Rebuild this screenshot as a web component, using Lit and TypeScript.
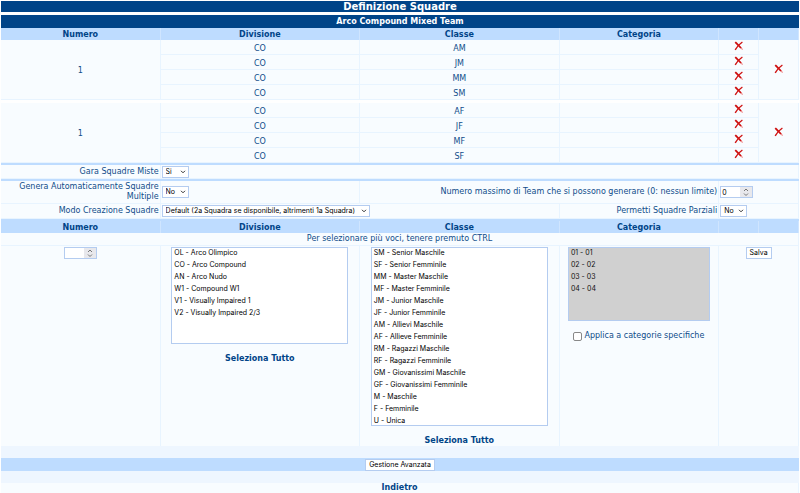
import { LitElement, html, css, nothing } from "lit";
import { customElement } from "lit/decorators.js";

interface Team {
  numero: number;
  divisione: string;
  classi: string[];
}

const TEAMS: Team[] = [
  { numero: 1, divisione: "CO", classi: ["AM", "JM", "MM", "SM"] },
  { numero: 1, divisione: "CO", classi: ["AF", "JF", "MF", "SF"] },
];

const DIVISIONI = [
  "OL - Arco Olimpico",
  "CO - Arco Compound",
  "AN - Arco Nudo",
  "W1 - Compound W1",
  "V1 - Visually Impaired 1",
  "V2 - Visually Impaired 2/3",
];

const CLASSI = [
  "SM - Senior Maschile",
  "SF - Senior Femminile",
  "MM - Master Maschile",
  "MF - Master Femminile",
  "JM - Junior Maschile",
  "JF - Junior Femminile",
  "AM - Allievi Maschile",
  "AF - Allieve Femminile",
  "RM - Ragazzi Maschile",
  "RF - Ragazzi Femminile",
  "GM - Giovanissimi Maschile",
  "GF - Giovanissimi Femminile",
  "M - Maschile",
  "F - Femminile",
  "U - Unica",
];

const CATEGORIE = ["01 - 01", "02 - 02", "03 - 03", "04 - 04"];

const cross = html`<svg class="cross" viewBox="0 0 10 10" aria-hidden="true">
  <path d="M2 1.2 L8.6 8.6" stroke="#f08c8c" stroke-width="1.2" />
  <path d="M1.2 1.2 L7 7" stroke="#cc1111" stroke-width="1.7" />
  <path d="M8.4 1 C6 2.6 3 5.6 1.2 8.8" stroke="#d01414" stroke-width="1.4" />
</svg>`;

const chevron = html`<svg class="chevron" viewBox="0 0 6 4" aria-hidden="true">
  <path d="M1 .8 L3 2.8 L5 .8" />
</svg>`;

const spinner = html`<svg class="spinner" viewBox="0 0 12 10" aria-hidden="true">
  <path d="M4 4 L6 2 L8 4 M4 6.5 L6 8.5 L8 6.5" />
</svg>`;

const headings = html`<tr class="heading">
  <th scope="col">Numero</th>
  <th scope="col">Divisione</th>
  <th scope="col">Classe</th>
  <th scope="col">Categoria</th>
  <th></th>
  <th></th>
</tr>`;

@customElement("app-root")
export class AppRoot extends LitElement {
  static styles = css`
    :host {
      display: block;
      padding: 1px 1px 0;
      background: #ffffff;
      color: #0f4c8a;
      font: 8px/10px "DejaVu Sans", sans-serif;
    }
    * {
      box-sizing: border-box;
    }
    table {
      width: 100%;
      table-layout: fixed;
      border-collapse: separate;
      border-spacing: 0;
      background: #f8fcff;
    }
    .wide {
      width: 25%;
    }
    .medium {
      width: 20%;
    }
    .narrow {
      width: 5%;
    }
    td,
    th {
      padding: 0;
      text-align: center;
    }
    td {
      border-right: 1px solid #e8f4ff;
      border-bottom: 1px solid #e8f4ff;
    }
    .title th {
      height: 11px;
      background: #004488;
      color: #ffffff;
      font-size: 10px;
    }
    .subtitle th {
      height: 13px;
      background: #004488;
      color: #ffffff;
      font-size: 8px;
    }
    .heading th {
      height: 12px;
      padding-top: 1px;
      background: #bedcff;
      color: #004488;
      border-right: 1px solid #cfe5ff;
    }
    .gap td {
      height: 3px;
      border: 0;
      background: #ffffff;
    }
    .rule td {
      height: 2px;
      border: 0;
      background: #bedcff;
    }
    .team td {
      height: 15px;
      padding-top: 3px;
    }
    .team .action {
      padding-top: 0;
    }
    .mixed td {
      height: 14px;
    }
    .auto td {
      height: 23px;
    }
    .mode td {
      height: 15px;
    }
    .hint td {
      height: 13px;
    }
    .label {
      text-align: right;
      padding-right: 1px;
    }
    .field {
      text-align: left;
      padding-left: 1px;
    }
    .picker {
      display: inline-flex;
      align-items: center;
      position: relative;
      vertical-align: middle;
    }
    select,
    input,
    button {
      margin: 0;
      border: 1px solid #b4ccf0;
      border-radius: 0;
      background: #ffffff;
      color: #000000;
      font: 7px/10px Inter, "Liberation Sans", sans-serif;
    }
    .picker select {
      appearance: none;
      height: 12px;
      padding: 0 10px 0 3px;
    }
    .short select {
      width: 27px;
    }
    .long select {
      width: 208px;
    }
    .chevron {
      position: absolute;
      right: 3px;
      width: 6px;
      height: 4px;
      pointer-events: none;
    }
    .chevron path,
    .spinner path {
      fill: none;
      stroke: #333333;
      stroke-width: 1;
    }
    .number input {
      appearance: textfield;
      width: 33px;
      height: 12px;
      padding: 0 12px 0 1px;
    }
    .number input::-webkit-inner-spin-button {
      display: none;
    }
    .spinner {
      position: absolute;
      right: 1px;
      width: 12px;
      height: 10px;
      background: #e8e8ec;
      pointer-events: none;
    }
    .spinner path {
      stroke: #777777;
    }
    .cross {
      display: block;
      width: 10px;
      height: 10px;
      fill: none;
    }
    .delete {
      display: block;
      margin: 0 auto;
      padding: 0 0 2px;
      border: 0;
      background: none;
    }
    .form td {
      vertical-align: top;
      padding-top: 1px;
      height: 200px;
      border-bottom: 0;
    }
    .stack {
      display: flex;
      flex-direction: column;
      align-items: center;
      gap: 10px;
    }
    .list {
      display: block;
      padding: 0;
      overflow: hidden;
      width: 177px;
    }
    .list option {
      height: 12px;
      min-height: 0;
      padding: 0 2px 3px;
    }
    .divisions {
      height: 97px;
    }
    .classes {
      height: 179px;
    }
    .categories {
      width: 142px;
      height: 74px;
      background: #d0d0d0;
    }
    .list:disabled {
      color: #000000;
      opacity: 1;
    }
    .list:disabled option {
      color: #101010;
    }
    .check {
      display: flex;
      align-items: center;
      gap: 2px;
    }
    .check input {
      appearance: none;
      width: 9px;
      height: 9px;
      border: 1px solid #888888;
      border-radius: 2px;
    }
    a {
      color: #004488;
      font-weight: bold;
      text-decoration: none;
    }
    .push {
      display: block;
      height: 12px;
      margin: 0 auto;
      padding: 0 3px;
    }
    .pale td {
      height: 12px;
      border: 0;
      background: #eef6ff;
    }
    .bar td {
      height: 13px;
      border: 0;
      background: #bedcff;
    }
    .back td {
      height: 11px;
    }
  `;

  private team(team: Team) {
    const rows = team.classi.length;
    return team.classi.map(
      (classe, i) => html`<tr class="team">
        ${i === 0 ? html`<td rowspan=${rows}>${team.numero}</td>` : nothing}
        <td>${team.divisione}</td>
        <td>${classe}</td>
        <td></td>
        <td class="action">
          <button class="delete" aria-label="Elimina ${classe}">${cross}</button>
        </td>
        ${i === 0
          ? html`<td class="action" rowspan=${rows}>
              <button class="delete" aria-label="Elimina squadra">${cross}</button>
            </td>`
          : nothing}
      </tr>`
    );
  }

  private choice(id: string, value: string, size: string) {
    return html`<span class="picker ${size}">
      <select id=${id}><option>${value}</option></select>${chevron}
    </span>`;
  }

  render() {
    return html`<table>
      <colgroup>
        <col class="medium" /><col class="wide" /><col class="wide" />
        <col class="medium" /><col class="narrow" /><col class="narrow" />
      </colgroup>
      <tbody>
        <tr class="title"><th colspan="6">Definizione Squadre</th></tr>
        <tr class="gap"><td colspan="6"></td></tr>
        <tr class="subtitle"><th colspan="6">Arco Compound Mixed Team</th></tr>
        ${headings} ${this.team(TEAMS[0])}
        <tr class="gap"><td colspan="6"></td></tr>
        ${this.team(TEAMS[1])}
        <tr class="rule"><td colspan="6"></td></tr>
        <tr class="mixed">
          <td class="label"><label for="miste">Gara Squadre Miste</label></td>
          <td class="field" colspan="5">${this.choice("miste", "Si", "short")}</td>
        </tr>
        <tr class="rule"><td colspan="6"></td></tr>
        <tr class="auto">
          <td class="label">
            <label for="multiple">Genera Automaticamente Squadre Multiple</label>
          </td>
          <td class="field">${this.choice("multiple", "No", "short")}</td>
          <td class="label" colspan="2">
            <label for="massimo"
              >Numero massimo di Team che si possono generare (0: nessun limite)</label
            >
          </td>
          <td class="field" colspan="2">
            <span class="picker number"
              ><input id="massimo" type="number" value="0" />${spinner}</span
            >
          </td>
        </tr>
        <tr class="mode">
          <td class="label"><label for="modo">Modo Creazione Squadre</label></td>
          <td class="field" colspan="2">
            ${this.choice(
              "modo",
              "Default (2a Squadra se disponibile, altrimenti 1a Squadra)",
              "long"
            )}
          </td>
          <td class="label"><label for="parziali">Permetti Squadre Parziali</label></td>
          <td class="field" colspan="2">${this.choice("parziali", "No", "short")}</td>
        </tr>
        <tr class="rule"><td colspan="6"></td></tr>
        ${headings}
        <tr class="hint">
          <td colspan="6">Per selezionare più voci, tenere premuto CTRL</td>
        </tr>
        <tr class="form">
          <td>
            <span class="picker number"
              ><input type="number" aria-label="Numero" />${spinner}</span
            >
          </td>
          <td>
            <div class="stack">
              <select class="list divisions" multiple size="8" aria-label="Divisione">
                ${DIVISIONI.map((d) => html`<option>${d}</option>`)}
              </select>
              <a href="#divisione">Seleziona Tutto</a>
            </div>
          </td>
          <td>
            <div class="stack">
              <select class="list classes" multiple size="15" aria-label="Classe">
                ${CLASSI.map((c) => html`<option>${c}</option>`)}
              </select>
              <a href="#classe">Seleziona Tutto</a>
            </div>
          </td>
          <td>
            <div class="stack">
              <select class="list categories" multiple size="6" disabled aria-label="Categoria">
                ${CATEGORIE.map((c) => html`<option>${c}</option>`)}
              </select>
              <label class="check"><input type="checkbox" />Applica a categorie specifiche</label>
            </div>
          </td>
          <td colspan="2"><button class="push">Salva</button></td>
        </tr>
        <tr class="pale"><td colspan="6"></td></tr>
        <tr class="bar">
          <td colspan="6"><button class="push">Gestione Avanzata</button></td>
        </tr>
        <tr class="pale"><td colspan="6"></td></tr>
        <tr class="back">
          <td colspan="6"><a href="#indietro">Indietro</a></td>
        </tr>
      </tbody>
    </table>`;
  }
}
